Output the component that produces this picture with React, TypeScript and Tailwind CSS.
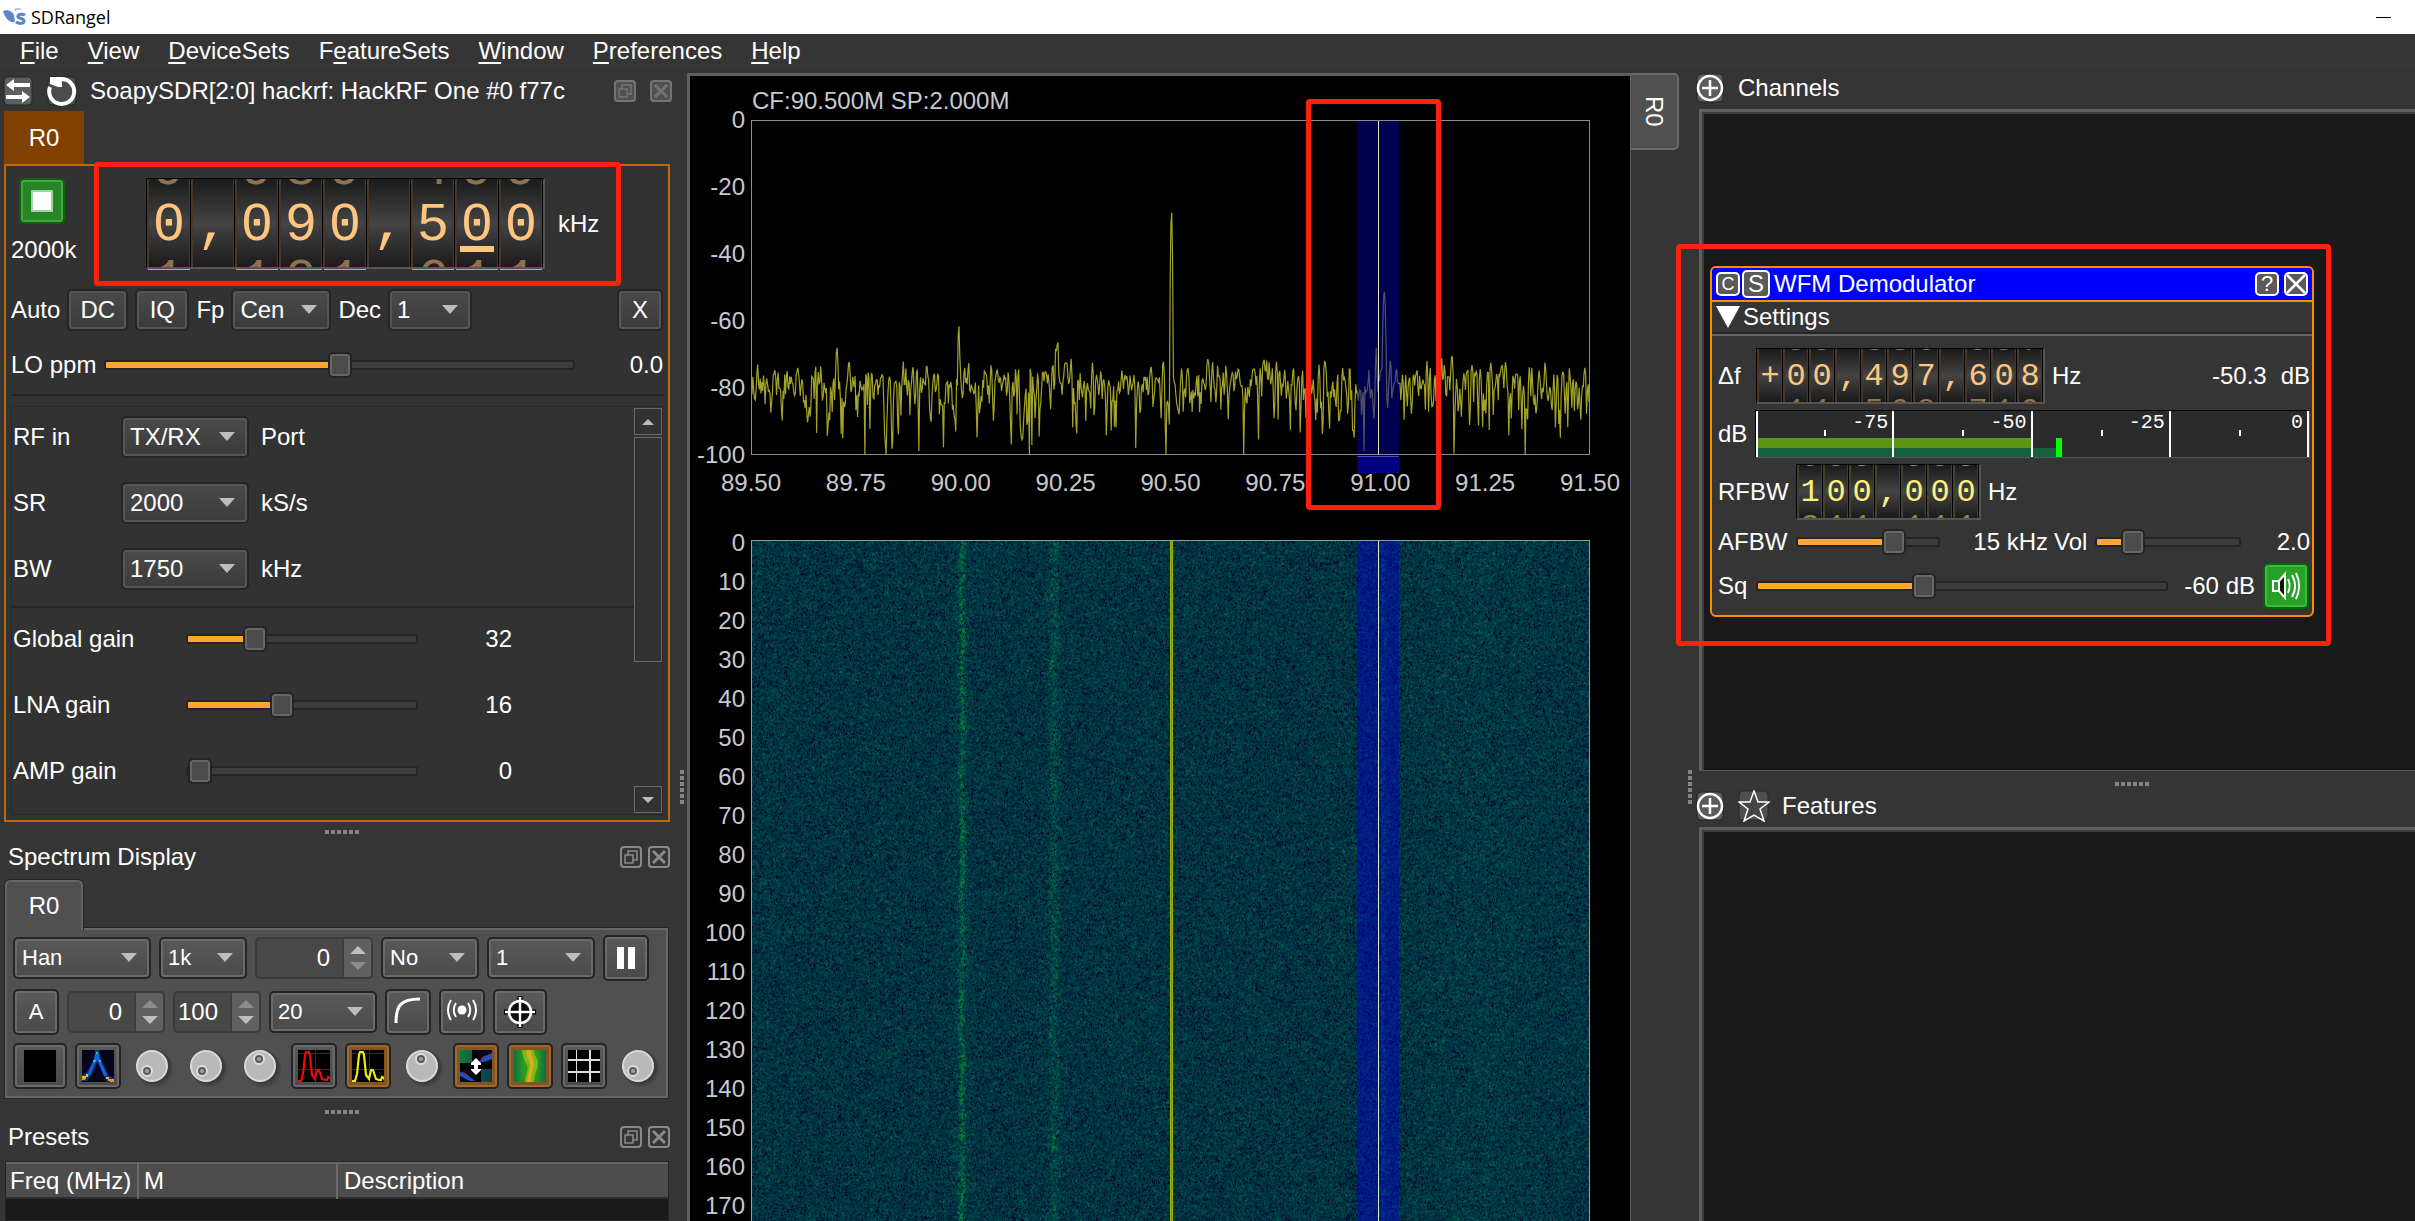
import { useEffect, useRef } from "react";
import type { CSSProperties, ReactNode } from "react";
import clsx from "clsx";

const makeRandom = (seed: number) => {
  let s = seed;
  return () => {
    s = (s + 0x6d2b79f5) | 0;
    let t = Math.imul(s ^ (s >>> 15), 1 | s);
    t = (t + Math.imul(t ^ (t >>> 7), 61 | t)) ^ t;
    return ((t ^ (t >>> 14)) >>> 0) / 4294967296;
  };
};

// One row of FFT noise in dB around 0, neighbouring bins correlated by the window
const noiseRow = (random: () => number, bins: number) => {
  const re: number[] = [];
  const im: number[] = [];
  for (let i = 0; i < bins + 2; i++) {
    const r = Math.sqrt(-2 * Math.log(random() + 1e-9));
    const a = 2 * Math.PI * random();
    re.push(r * Math.cos(a));
    im.push(r * Math.sin(a));
  }
  const out: number[] = [];
  for (let i = 0; i < bins; i++) {
    const x = -0.5 * re[i] + re[i + 1] - 0.5 * re[i + 2];
    const y = -0.5 * im[i] + im[i + 1] - 0.5 * im[i + 2];
    out.push(10 * Math.log10((x * x + y * y) / 3 + 1e-4));
  }
  return out;
};

const PEAKS = [
  { x: 85, db: -68, w: 1.5 },
  { x: 207, db: -61, w: 0.9 },
  { x: 306, db: -65, w: 0.9 },
  { x: 420, db: -27, w: 0.9 },
  { x: 625, db: -68, w: 1 },
  { x: 633, db: -51, w: 1.4 },
];

const spectrumPath = () => {
  const bins = 1024;
  const noise = noiseRow(makeRandom(91), bins);
  let d = "";
  for (let i = 0; i < bins; i++) {
    const x = (i / (bins - 1)) * 838;
    let db = -78.5 + noise[i] * 0.95 + 6 * Math.exp(-(((x - 304) / 10) ** 2));
    for (const p of PEAKS) {
      const off = Math.abs(x - p.x) / p.w;
      if (off < 2) db = Math.max(db, p.db - off * off * 9);
    }
    const y = Math.min(334, -db * 3.34);
    d += `${i ? "L" : "M"}${x.toFixed(1)} ${y.toFixed(1)}`;
  }
  return d;
};

const SPECTRUM = spectrumPath();

const Waterfall = () => {
  const ref = useRef<HTMLCanvasElement>(null);

  useEffect(() => {
    const canvas = ref.current;
    const ctx = canvas?.getContext("2d");
    if (!canvas || !ctx) return;
    const w = (canvas.width = canvas.clientWidth);
    const h = (canvas.height = canvas.clientHeight);
    const img = ctx.createImageData(w, h);
    const random = makeRandom(7);
    const scale = 838 / w;
    let prev = noiseRow(random, w);
    let drift = 0;
    for (let y = 0; y < h; y++) {
      const row = noiseRow(random, w);
      drift = drift * 0.9 + (random() - 0.5) * 1.2;
      for (let x = 0; x < w; x++) {
        const px = x * scale;
        let db = row[x] * 0.6 + prev[x] * 0.4;
        db += 6 * Math.exp(-(((px - 210 - drift) / 2.5) ** 2)) + 2 * Math.exp(-(((px - 210) / 9) ** 2));
        db += 4.5 * Math.exp(-(((px - 302 - drift) / 5) ** 2));
        db += 5 * Math.exp(-(((px - 631 - drift) / 3) ** 2));
        db += 1 * Math.exp(-(((px - 725) / 60) ** 2));
        const t = Math.max(0, Math.min(1.3, (db + 15) / 20));
        const hot = Math.max(0, t - 0.9);
        const i = (y * w + x) * 4;
        img.data[i] = 0;
        img.data[i + 1] = 2 + 76 * t + hot * 90;
        img.data[i + 2] = 42 + 36 * t - hot * 120;
        img.data[i + 3] = 255;
      }
      prev = row;
    }
    ctx.putImageData(img, 0, 0);
    const cx = Math.round(419 / scale);
    ctx.fillStyle = "#9db500";
    ctx.fillRect(cx - 1, 0, 3, h);
    ctx.fillStyle = "#6a9a00";
    ctx.fillRect(cx, 0, 1, h);
  }, []);

  return <canvas ref={ref} className="block h-full w-full" />;
};

const Dots = ({ vertical }: { vertical?: boolean }) => (
  <div className={clsx("flex gap-[2px]", vertical && "flex-col")}>
    {[0, 1, 2, 3, 4, 5].map((i) => (
      <span key={i} className="h-1 w-1 bg-[#858585]" />
    ))}
  </div>
);

const BUTTON =
  "flex shrink-0 items-center justify-center rounded-[5px] border-2 border-[#252525] bg-linear-to-b from-[#4a4a4a] to-[#3b3b3b] shadow-[inset_0_0_0_2px_#565656]";
const LIGHT =
  "flex shrink-0 items-center justify-center rounded-[5px] border-2 border-[#252525] bg-linear-to-b from-[#5a5a5a] to-[#4a4a4a] shadow-[inset_0_0_0_2px_#6a6a6a]";
const CHECKED =
  "flex shrink-0 items-center justify-center rounded-[5px] border-2 border-[#252525] bg-[#84551f] shadow-[inset_0_0_0_2px_#9c6a30]";

const Combo = ({ value, label, className, light }: { value: string; label: string; className: string; light?: boolean }) => (
  <div className={clsx("relative h-[42px] shrink-0", className)}>
    <select
      aria-label={label}
      defaultValue={value}
      className={clsx(
        "h-full w-full appearance-none rounded-[5px] border-2 border-[#252525] bg-linear-to-b pl-[7px] text-white",
        light
          ? "from-[#5a5a5a] to-[#4a4a4a] text-[22px] shadow-[inset_0_0_0_2px_#6a6a6a]"
          : "from-[#4a4a4a] to-[#3b3b3b] shadow-[inset_0_0_0_2px_#565656]"
      )}
    >
      <option>{value}</option>
    </select>
    <svg viewBox="0 0 16 9" className="pointer-events-none absolute top-4 right-[14px] h-[9px] w-4" fill="#bdbdbd">
      <path d="M0 0h16L8 9z" />
    </svg>
  </div>
);

const Spin = ({ value, label, className, up, down }: { value: number; label: string; className: string; up: string; down: string }) => (
  <div className={clsx("flex h-[42px] shrink-0 overflow-hidden rounded-[5px] border-2 border-[#3c3c3c] bg-[#484848]", className)}>
    <input
      aria-label={label}
      type="number"
      defaultValue={value}
      className="w-0 min-w-0 flex-1 appearance-none pr-3 text-right [&::-webkit-inner-spin-button]:appearance-none"
    />
    <div className="flex w-[29px] flex-col border-l-2 border-[#3c3c3c] bg-[#606060]">
      <button aria-label={`${label} up`} className="flex flex-1 items-end justify-center pb-1">
        <svg viewBox="0 0 16 8" className="h-2 w-4" fill={up}><path d="M0 8h16L8 0z" /></svg>
      </button>
      <button aria-label={`${label} down`} className="flex flex-1 items-start justify-center pt-1">
        <svg viewBox="0 0 16 8" className="h-2 w-4" fill={down}><path d="M0 0h16L8 8z" /></svg>
      </button>
    </div>
  </div>
);

const Slider = ({ label, percent, className }: { label: string; percent: number; className: string }) => (
  <input
    type="range"
    aria-label={label}
    min={0}
    max={100}
    defaultValue={percent}
    style={{ "--fill": `${percent}%` } as CSSProperties}
    className={clsx(
      "h-[26px] appearance-none bg-transparent",
      "[&::-webkit-slider-runnable-track]:h-[10px] [&::-webkit-slider-runnable-track]:rounded-[3px] [&::-webkit-slider-runnable-track]:border-2 [&::-webkit-slider-runnable-track]:border-[#252525] [&::-webkit-slider-runnable-track]:bg-[linear-gradient(to_right,#ffa530_var(--fill),#3c3c3c_var(--fill))]",
      "[&::-webkit-slider-thumb]:-mt-[10px] [&::-webkit-slider-thumb]:h-[26px] [&::-webkit-slider-thumb]:w-6 [&::-webkit-slider-thumb]:appearance-none [&::-webkit-slider-thumb]:rounded-[5px] [&::-webkit-slider-thumb]:border-2 [&::-webkit-slider-thumb]:border-[#252525] [&::-webkit-slider-thumb]:bg-[#4b4b4b] [&::-webkit-slider-thumb]:shadow-[inset_0_0_0_2px_#666]",
      className
    )}
  />
);

const Dial = ({ digits, tone, big, cursor }: { digits: string; tone: "orange" | "yellow"; big?: boolean; cursor?: number }) => (
  <div className={clsx("flex shrink-0 border-t border-r-2 border-b-2 border-l border-t-black border-r-[#555] border-b-[#555] border-l-black bg-black font-[Liberation_Mono,monospace]", big ? "h-[91px]" : "h-[56px]")}>
    {digits.split("").map((c, i) => {
      const n = Number(c);
      const digit = c >= "0" && c <= "9";
      return (
        <div key={i} className={clsx("relative h-full", big ? "w-[44px]" : "w-[26px]")}>
          <div
            className={clsx(
              "flex h-full flex-col items-center justify-center overflow-hidden border-x-2 bg-linear-to-b from-[#1b1b1b] via-[#444] to-[#1b1b1b]",
              big ? "pt-[6px] text-[54px] leading-[56px]" : "pt-[2px] text-[32px] leading-[35px]",
              tone === "orange" ? "border-[#46372a] text-[#ffc680]" : "border-[#45412a] text-[#fff078]"
            )}
          >
            {digit && <span aria-hidden className="opacity-50">{(n + 9) % 10}</span>}
            <span>{c}</span>
            {digit && <span aria-hidden className="opacity-50">{(n + 1) % 10}</span>}
          </div>
          <span className="absolute inset-y-0 right-0 w-px bg-black" />
          {cursor === i && <span className="absolute bottom-[15px] left-[5px] h-[6px] w-[34px] bg-[#ffc680]" />}
          {big && digit && <span className="absolute right-px -bottom-[3px] left-px h-px bg-[#e0a050]" />}
        </div>
      );
    })}
  </div>
);

const DockButtons = ({ wide }: { wide?: boolean }) => (
  <div className={clsx("ml-auto flex", wide ? "gap-[14px] opacity-75" : "gap-[6px]")}>
    <button aria-label="Float">
      <svg viewBox="0 0 22 22" className="h-[22px] w-[22px]" fill="none" stroke="#8a8a8a" strokeWidth="2">
        {wide && <rect width="22" height="22" rx="4" fill="#5a5a5a" stroke="none" />}
        <rect x="1" y="1" width="20" height="20" rx="3" />
        <path d="M5 9h8v8H5zM8 9V5h9v9h-4" strokeWidth="1.5" />
      </svg>
    </button>
    <button aria-label="Close">
      <svg viewBox="0 0 22 22" className="h-[22px] w-[22px]" fill="none" stroke="#8a8a8a" strokeWidth="2">
        {wide && <rect width="22" height="22" rx="4" fill="#5a5a5a" stroke="none" />}
        <rect x="1" y="1" width="20" height="20" rx="3" />
        <path d="M5 5l12 12M17 5L5 17" strokeWidth="3" />
      </svg>
    </button>
  </div>
);

const Knob = ({ label, x, y }: { label: string; x: number; y: number }) => (
  <button aria-label={label} className="flex h-[46px] w-[46px] shrink-0 items-center justify-center">
    <svg viewBox="0 0 46 46" className="h-[46px] w-[46px]">
      <circle cx="26" cy="26" r="18" fill="#474747" />
      <circle cx="25" cy="24" r="17" fill="#3c3c3c" />
      <circle cx="23" cy="23" r="15" fill="#b9b9b9" stroke="#dadada" strokeWidth="2" />
      <circle cx={x} cy={y} r="5" fill="#5c5c5c" stroke="#dcdcdc" strokeWidth="2" />
      <circle cx={x} cy={y} r="2" fill="#a0a0a0" />
    </svg>
  </button>
);

const Thumb = ({ children }: { children: ReactNode }) => (
  <svg viewBox="0 0 32 32" className="h-8 w-8" fill="none">
    <rect width="32" height="32" fill="#000" />
    {children}
  </svg>
);

const Trace = ({ color }: { color: string }) => (
  <Thumb>
    <path d="M0 3.500h32M0 19.500h32M17.500 0v32" stroke="#2c2c2c" />
    <path d="M0 31h3l2-7 2-19 1-3h3l1 3 2 20 3 4 2-9 2 0 3 9 3 1 2 0 1-3 2 1 1 3" stroke={color} strokeWidth="2.2" />
  </Thumb>
);

const PlusIcon = () => (
  <svg viewBox="0 0 28 30" className="h-[30px] w-7" fill="none" stroke="#fff">
    <rect x="1" y="1" width="26" height="28" rx="4" fill="#5c5c5c" stroke="#262626" />
    <circle cx="14" cy="15" r="12" strokeWidth="2.5" />
    <path d="M14 7v16M6 15h16" strokeWidth="2.5" />
  </svg>
);

const MENU = [
  ["", "F", "ile"],
  ["", "V", "iew"],
  ["", "D", "eviceSets"],
  ["F", "e", "atureSets"],
  ["", "W", "indow"],
  ["", "P", "references"],
  ["", "H", "elp"],
];

const DeviceDock = () => (
  <>
    <div className="flex h-10 shrink-0 items-center pr-3 pl-[3px]">
      <button aria-label="Change device">
        <svg viewBox="0 0 30 30" className="h-[30px] w-[30px]">
          <rect x="1" y="1" width="28" height="28" rx="4" fill="#5e5e5e" stroke="#262626" />
          <path d="M3 9l8-6v4h16v4H11v4zM27 21l-8-6v4H3v4h16v4z" fill="#fff" />
        </svg>
      </button>
      <button aria-label="Reload" className="ml-[14px]">
        <svg viewBox="0 0 30 32" className="h-8 w-[30px]">
          <rect x="1" y="2" width="28" height="28" rx="4" fill="#4c4c4c" stroke="#262626" />
          <path d="M14 4a12.5 12.5 0 1 1-11 8" fill="none" stroke="#fff" strokeWidth="4" />
          <path d="M3 2l12 0v10H11L3 9z" fill="#fff" />
        </svg>
      </button>
      <h2 className="ml-[13px]">SoapySDR[2:0] hackrf: HackRF One #0 f77c</h2>
      <DockButtons wide />
    </div>
    <button className="ml-1 h-[53px] w-20 shrink-0 bg-[#804000]">R0</button>

    <section className="relative mr-[14px] ml-1 shrink-0 border-2 border-[#bf6a0a] bg-[#323232] px-[5px] pb-[5px]">
      <div className="pointer-events-none absolute -top-1 left-[88px] h-[124px] w-[527px] rounded-[4px] border-[5px] border-[#ff2010]" />
      <div className="flex h-[120px] pt-3">
        <div className="flex w-[66px] flex-col gap-3">
          <button aria-label="Stop acquisition" className="ml-2 flex h-[46px] w-[46px] items-center justify-center rounded-[5px] border-2 border-[#0a640a] bg-[#248724] shadow-[inset_0_0_0_2px_#47a447]">
            <span className="h-[22px] w-[22px] border-2 border-[#a5cfa5] bg-white" />
          </button>
          <span className="leading-7">2000k</span>
        </div>
        <div className="ml-[69px] flex gap-[13px]">
          <Dial digits="0,090,500" tone="orange" big cursor={7} />
          <span className="leading-[91px]">kHz</span>
        </div>
      </div>
      <div className="flex h-12 items-center gap-[7px]">
        <span>Auto</span>
        <button className={clsx(BUTTON, "h-[42px] w-[61px]")}>DC</button>
        <button className={clsx(BUTTON, "h-[42px] w-[54px]")}>IQ</button>
        <span>Fp</span>
        <Combo label="Fp" value="Cen" className="w-[100px]" />
        <span>Dec</span>
        <Combo label="Decimation" value="1" className="w-[84px]" />
        <button className={clsx(BUTTON, "ml-auto h-[42px] w-[46px]")}>X</button>
      </div>
      <div className="flex h-[62px] items-center gap-2 border-b-2 border-[#262626] pt-[2px]">
        <span>LO ppm</span>
        <Slider label="LO ppm" percent={50} className="min-w-0 flex-1" />
        <span className="w-20 text-right">0.0</span>
      </div>

      <div className="mt-[10px] flex border border-[#282828]">
        <div className="flex-1">
          <div className="flex flex-col gap-[6px] border-b-2 border-[#262626] pb-[7px] pl-px">
            {[
              ["RF in", "TX/RX", "Port"],
              ["SR", "2000", "kS/s"],
              ["BW", "1750", "kHz"],
            ].map(([label, value, unit]) => (
              <div key={label} className="flex h-[60px] items-center">
                <span className="w-[108px]">{label}</span>
                <Combo label={label} value={value} className="w-[128px]" />
                <span className="ml-3">{unit}</span>
              </div>
            ))}
          </div>
          <div className="flex flex-col gap-[6px] pt-px pb-[13px] pl-px">
            {[
              { label: "Global gain", percent: 27, value: 32 },
              { label: "LNA gain", percent: 40, value: 16 },
              { label: "AMP gain", percent: 0, value: 0 },
            ].map((g) => (
              <div key={g.label} className="flex h-[60px] items-center">
                <span className="w-[173px]">{g.label}</span>
                <Slider label={g.label} percent={g.percent} className="w-[232px]" />
                <span className="w-[94px] text-right">{g.value}</span>
              </div>
            ))}
          </div>
        </div>
        <div className="flex w-7 flex-col gap-[2px] py-px">
          <button aria-label="Scroll up" className="flex h-[27px] items-center justify-center border border-[#6a6a6a]">
            <svg viewBox="0 0 12 6" className="h-[6px] w-3" fill="#bdbdbd"><path d="M0 6h12L6 0z" /></svg>
          </button>
          <div className="h-[225px] border border-[#6a6a6a]" />
          <button aria-label="Scroll down" className="mt-auto flex h-[27px] items-center justify-center border border-[#6a6a6a]">
            <svg viewBox="0 0 12 6" className="h-[6px] w-3" fill="#bdbdbd"><path d="M0 0h12L6 6z" /></svg>
          </button>
        </div>
      </div>
    </section>
  </>
);

const SpectrumDock = () => (
  <>
    <div className="flex h-5 shrink-0 items-center justify-center"><Dots /></div>
    <div className="flex h-[30px] shrink-0 items-center pr-[14px] pl-2">
      <h2>Spectrum Display</h2>
      <DockButtons />
    </div>
    <button className="relative z-10 mt-2 -mb-[2px] ml-[5px] h-[50px] w-[78px] shrink-0 rounded-t-[5px] border-2 border-b-0 border-[#666] bg-[#505050] outline-1 outline-[#262626] [clip-path:inset(-1px_-1px_0_-1px)]">R0</button>
    <section className="mr-4 ml-[5px] flex shrink-0 flex-col gap-2 border-2 border-[#666] bg-[#505050] px-[6px] pt-[5px] pb-[7px] shadow-[0_0_0_1px_#262626]">
      <div className="flex h-[46px] items-center gap-2">
        <Combo light label="FFT window" value="Han" className="w-[138px]" />
        <Combo light label="FFT size" value="1k" className="w-[88px]" />
        <Spin label="Overlap" value={0} className="w-[118px]" up="#bdbdbd" down="#8c8c8c" />
        <Combo light label="Averaging mode" value="No" className="w-[98px]" />
        <Combo light label="Averages" value="1" className="w-[108px]" />
        <button aria-label="Pause" className={clsx(LIGHT, "h-[46px] w-[46px]")}>
          <svg viewBox="0 0 18 22" className="h-[22px] w-[18px]" fill="#fff"><path d="M0 0h7v22H0zM11 0h7v22h-7z" /></svg>
        </button>
      </div>
      <div className="flex h-[46px] items-center gap-2">
        <button className={clsx(LIGHT, "h-[46px] w-[46px] text-[22px]")}>A</button>
        <Spin label="Reference level" value={0} className="w-[98px]" up="#8c8c8c" down="#bdbdbd" />
        <Spin label="Power range" value={100} className="w-[88px]" up="#8c8c8c" down="#bdbdbd" />
        <Combo light label="Frames per second" value="20" className="w-[108px]" />
        <button aria-label="Log scale" className={clsx(LIGHT, "h-[46px] w-[46px]")}>
          <svg viewBox="0 0 28 28" className="-mt-1 h-7 w-7" fill="none" stroke="#fff" strokeWidth="3"><path d="M2 27C2 10 6 3 26 3" /></svg>
        </button>
        <button aria-label="Spectrum server" className={clsx(LIGHT, "h-[46px] w-[46px]")}>
          <svg viewBox="0 0 30 24" className="-mt-1 h-6 w-[30px]" fill="none" stroke="#fff" strokeWidth="2">
            <circle cx="15" cy="12" r="4.5" fill="#fff" stroke="none" />
            <path d="M9 5c-3 4-3 10 0 14M21 5c3 4 3 10 0 14M4 2c-4 6-4 14 0 20M26 2c4 6 4 14 0 20" />
          </svg>
        </button>
        <button aria-label="Markers" className={clsx(LIGHT, "h-[46px] w-[54px]")}>
          <svg viewBox="0 0 32 32" className="h-8 w-8" fill="none">
            <circle cx="16" cy="16" r="11.5" fill="#111" />
            <path d="M16 0v32M0 16h32" stroke="#000" strokeWidth="5" />
            <circle cx="16" cy="16" r="11" stroke="#fff" strokeWidth="2.5" />
            <path d="M16 1v30M1 16h30" stroke="#fff" strokeWidth="2.5" />
          </svg>
        </button>
      </div>
      <div className="flex h-[46px] items-center gap-2">
        <button aria-label="Clear spectrum" className={clsx(LIGHT, "h-[46px] w-[54px]")}><Thumb>{null}</Thumb></button>
        <button aria-label="Phosphor" className={clsx(LIGHT, "h-[46px] w-[46px]")}>
          <Thumb>
            <rect width="32" height="32" fill="#05051a" />
            <path d="M13 1h4l2 8 7 16 6 3v4h-7l-4-8-5-11h-1l-5 11-5 7H0v-6l5-3 7-13z" fill="#0d2fa0" />
            <path d="M13 4h4l1 6 7 15-3 1-6-15h-2L8 25l-3 1 7-16z" fill="#1268e0" />
            <path d="M13 0h4v2h-4z" fill="#0b5040" />
            <path d="M14 2h2v2h-2zM11 10h3v2h-3zM17 10h2v2h-2z" fill="#30c890" />
            <path d="M0 26h4v-2h2v3H4v2H0zM24 27h3v2h-3z" fill="#d8c030" />
            <path d="M0 28h3v2H0zM26 29h6v3h-4v-1h-2z" fill="#ff8a28" />
          </Thumb>
        </button>
        <Knob label="Phosphor stroke" x={18} y={28} />
        <Knob label="Phosphor decay" x={19} y={28} />
        <Knob label="Decay divisor" x={22} y={16} />
        <button aria-label="Max hold" className={clsx(LIGHT, "h-[46px] w-[46px]")}><Trace color="#f00808" /></button>
        <button aria-label="Current trace" className={clsx(CHECKED, "h-[46px] w-[46px]")}><Trace color="#ecec08" /></button>
        <Knob label="Trace intensity" x={22} y={16} />
        <button aria-label="Invert waterfall" className={clsx(CHECKED, "h-[46px] w-[46px]")}>
          <Thumb>
            <defs>
              <linearGradient id="invert-a"><stop stopColor="#0f7a3c" /><stop offset="1" stopColor="#0c3a50" /></linearGradient>
            </defs>
            <path d="M0 0h12v13H0zM21 19h11v13H21z" fill="url(#invert-a)" />
            <path d="M14 0h18v12H20zM0 20h14v12H0z" fill="#06061c" />
            <path d="M20 12l3-5 9-4v6l-8 3zM0 22l6 2 9 7h-5l-10-5z" fill="#1a50c8" />
            <path d="M20 11l3-4 3-1M2 22l4 2 4 4" stroke="#a02828" />
            <path d="M16 8l5 5v2h-3v4h3v1l-5 5-5-5v-1h3v-4h-3v-2z" fill="#fff" />
          </Thumb>
        </button>
        <button aria-label="Waterfall" className={clsx(CHECKED, "h-[46px] w-[46px]")}>
          <Thumb>
            <defs>
              <linearGradient id="wf-side">
                <stop stopColor="#0b7048" /><stop offset="0.3" stopColor="#2f9a1c" />
                <stop offset="0.7" stopColor="#2f9a1c" /><stop offset="1" stopColor="#0b6a50" />
              </linearGradient>
            </defs>
            <rect width="32" height="32" fill="url(#wf-side)" />
            <path d="M8 0h12c0 6 4 8 4 14s-4 8-4 18h-9c0-6 4-12 2-17-2-4-5-9-5-15z" fill="#7cb81c" />
            <path d="M12 0h5c0 5 3 8 3 14 0 5-3 8-3 18h-4c0-8 3-11 3-17 0-5-4-9-4-15z" fill="#d0b01c" />
          </Thumb>
        </button>
        <button aria-label="Grid" className={clsx(LIGHT, "h-[46px] w-[46px]")}>
          <Thumb><path d="M8.500 0v32" stroke="#ddd" /><path d="M22 0v32M0 10h32M0 22h32" stroke="#ddd" strokeWidth="2" /></Thumb>
        </button>
        <Knob label="Grid intensity" x={18} y={28} />
      </div>
    </section>
  </>
);

const PresetsDock = () => (
  <>
    <div className="flex h-6 shrink-0 items-center justify-center pt-1"><Dots /></div>
    <div className="flex h-[30px] shrink-0 items-center pr-[14px] pl-2">
      <h2>Presets</h2>
      <DockButtons />
    </div>
    <div className="mt-[9px] mr-[15px] ml-[5px] flex-1 border border-[#262626] bg-[#191919]">
      <table className="w-full table-fixed border-collapse text-left">
        <thead>
          <tr className="h-[35px] border-t-2 border-b-2 border-t-[#666] border-b-[#2e2e2e] bg-[#4c4c4c]">
            <th className="w-[132px] border-r-2 border-[#6a6a6a] pl-1 font-normal whitespace-nowrap">Freq (MHz)</th>
            <th className="w-[199px] border-r-2 border-[#6a6a6a] pl-[5px] font-normal">M</th>
            <th className="pl-[6px] font-normal">Description</th>
          </tr>
        </thead>
      </table>
    </div>
  </>
);

const SpectrumView = () => (
  <div className="mt-[2px] ml-[3px] flex min-w-0 flex-1 flex-col border-t-[3px] border-l-[3px] border-[#606060] bg-black pr-10 text-[#c8c8d0]">
    <div className="flex h-11 shrink-0 items-center pt-[6px] pl-[62px]">CF:90.500M SP:2.000M</div>
    <div className="flex h-[335px] shrink-0">
      <div className="flex w-[61px] flex-col justify-between">
        {["0", "-20", "-40", "-60", "-80", "-100"].map((l) => (
          <span key={l} className="flex h-0 items-center justify-end pr-[6px]">{l}</span>
        ))}
      </div>
      <div className="relative flex-1 border border-[#8c8c8c]">
        <svg viewBox="0 0 838 334" preserveAspectRatio="none" className="absolute inset-0 h-full w-full">
          <path d={SPECTRUM} fill="none" stroke="#a3a32a" strokeWidth="1.2" />
        </svg>
        <div className="absolute inset-y-0 left-[72.3%] w-[5%] bg-[#0000a0]/50" />
        <div className="absolute inset-y-0 left-[74.8%] w-px bg-[#e6e6b4]" />
        <div className="absolute top-full left-[72.3%] mt-[2px] h-[17px] w-[5%] border-t border-[#5050b0] bg-[#000080]" />
        <div className="pointer-events-none absolute -top-[22px] left-[66.200%] h-[411px] w-[135px] rounded-[4px] border-[5px] border-[#ff2010]" />
      </div>
    </div>
    <div className="ml-[61px] flex h-[68px] shrink-0 justify-between pt-4">
      {["89.50", "89.75", "90.00", "90.25", "90.50", "90.75", "91.00", "91.25", "91.50"].map((l) => (
        <span key={l} className="flex h-6 w-0 items-center justify-center">{l}</span>
      ))}
    </div>
    <div className="flex min-h-0 flex-1 overflow-hidden">
      <div className="w-[61px] pr-[6px] text-right leading-[39px]">
        {Array.from({ length: 18 }, (_, i) => (
          <div key={i}>{i * 10}</div>
        ))}
      </div>
      <div className="relative mt-[17px] flex-1 border border-b-0 border-[#8ca0a0]">
        <Waterfall />
        <div className="absolute inset-y-0 left-[72.3%] w-[5%] bg-[#0000d0]/45" />
        <div className="absolute inset-y-0 left-[74.8%] w-px bg-[#e6e6b4]" />
      </div>
    </div>
  </div>
);

const LevelMeter = () => (
  <div className="relative flex h-12 flex-1 border border-black border-r-[#555] border-b-[#555] bg-[#2b2b2b] font-[Liberation_Mono,monospace] text-[20px] leading-[24px]">
    <div className="absolute bottom-2 left-0 h-[11px] w-1/2 bg-[#5a9614]" />
    <div className="absolute bottom-0 left-0 h-[9px] w-[54.300%] bg-[#17603f]" />
    <div className="absolute bottom-0 left-[54.300%] h-[19px] w-[6px] bg-[#00ff00]" />
    <span className="absolute inset-y-0 left-0 w-[2px] bg-white" />
    {["-75", "-50", "-25", "0"].map((l) => (
      <div key={l} className="relative h-full flex-1 border-r-2 border-white pr-1 text-right">
        {l}
        <span className="absolute top-[19px] left-1/2 h-[6px] w-[2px] bg-white" />
      </div>
    ))}
  </div>
);

const BADGE = "flex shrink-0 items-center justify-center rounded-[5px] border-2 border-white bg-[#5a5a5a]";

const WfmDemodulator = () => (
  <section className="absolute top-[152px] left-[6px] w-[604px] overflow-hidden rounded-[6px] border-2 border-[#ff8c00] bg-[#353535]">
    <div className="flex h-[34px] items-center border-b-2 border-[#ff8c00] bg-[#0000ff] px-1">
      <button className={clsx(BADGE, "h-6 w-6 text-[18px] leading-none")}>C</button>
      <button className={clsx(BADGE, "ml-[2px] h-7 w-7 leading-none")}>S</button>
      <h3 className="ml-1 flex-1">WFM Demodulator</h3>
      <button className={clsx(BADGE, "h-6 w-6 text-[22px] leading-none")}>?</button>
      <button aria-label="Close channel" className={clsx(BADGE, "ml-[5px] h-6 w-6")}>
        <svg viewBox="0 0 20 20" className="h-5 w-5" stroke="#fff" strokeWidth="2.5"><path d="M1 1l18 18M19 1L1 19" /></svg>
      </button>
    </div>
    <button className="flex h-[34px] w-full items-center gap-[3px] border-b-2 border-[#666] pb-[3px] pl-1 shadow-[inset_0_-2px_0_#262626]">
      <svg viewBox="0 0 24 22" className="h-[22px] w-6" fill="#fff"><path d="M0 0h24L12 22z" /></svg>
      Settings
    </button>
    <div className="pt-3 pr-[2px] pb-[7px] pl-[6px]">
      <div className="flex items-center">
        <span className="w-[38px]">Δf</span>
        <Dial digits="+00,497,608" tone="orange" />
        <span className="ml-[7px]">Hz</span>
        <span className="ml-auto">-50.3</span>
        <span className="ml-[14px]">dB</span>
      </div>
      <div className="mt-[6px] flex items-center">
        <span className="w-[37px]">dB</span>
        <LevelMeter />
      </div>
      <div className="mt-[6px] flex items-center">
        <span className="w-[78px]">RFBW</span>
        <Dial digits="100,000" tone="yellow" />
        <span className="ml-[7px]">Hz</span>
      </div>
      <div className="flex h-11 items-center">
        <span className="w-[78px]">AFBW</span>
        <Slider label="AFBW" percent={72} className="w-[144px]" />
        <span className="w-[108px] text-right">15 kHz</span>
        <label className="ml-[6px]">Vol</label>
        <Slider label="Vol" percent={20} className="ml-2 w-[146px]" />
        <span className="ml-auto">2.0</span>
      </div>
      <div className="flex h-11 items-center">
        <span className="w-[38px]">Sq</span>
        <Slider label="Squelch" percent={40} className="min-w-0 flex-1" />
        <span className="w-[87px] text-right">-60 dB</span>
        <button aria-label="Mute" className="mr-px ml-2 flex h-[46px] w-[46px] items-center justify-center rounded-[5px] border-2 border-[#0a640a] bg-[#27a127] shadow-[inset_0_0_0_2px_#3fb83f]">
          <svg viewBox="0 0 30 30" className="h-[30px] w-[30px]" fill="none" stroke="#fff" strokeWidth="2">
            <path d="M8 10l6-7v24l-6-7z" fill="#111" />
            <path d="M2 10h6v10H2z" fill="#27a127" />
            <path d="M17 8c2 4 2 10 0 14M21 4c4 7 4 15 0 22M25 2c4 8 4 18 0 26" />
          </svg>
        </button>
      </div>
    </div>
  </section>
);

const PANE = "relative mt-0 ml-[15px] border-t-[3px] border-l-[3px] border-[#606060]";
const PANE_INNER = "h-full border-t-2 border-l-2 border-[#3c3c3c] bg-[#191919]";

const App = () => (
  <div className="flex h-screen min-h-[700px] flex-col overflow-hidden bg-[#353535] font-[Liberation_Sans,Arial,sans-serif] text-[24px] leading-7 text-white">
    <header className="flex h-[34px] shrink-0 items-center bg-white pr-6 pl-[3px] text-black">
      <svg viewBox="0 0 24 20" className="h-5 w-6" fill="#5b85cc">
        <path d="M0 4c5-2 10 1 11 4l1 7C6 16 2 11 0 4z" />
        <path d="M11 2c4-2 8-1 9 1-3-1-6 0-8 1z" fill="#a9c0e6" />
        <path d="M22 8c-4-2-8 0-7 2 1 2 6 1 6 4 0 3-5 3-8 1" fill="none" stroke="#5b85cc" strokeWidth="3" />
      </svg>
      <h1 className="ml-1 flex-1 font-[Open_Sans,Noto_Sans,sans-serif] text-[18px]">SDRangel</h1>
      <button aria-label="Minimize" className="flex h-full items-center"><span className="h-px w-[15px] bg-black" /></button>
    </header>
    <nav className="flex h-[37px] shrink-0 items-center gap-px border-b border-[#2e2e2e] pb-[2px] pl-[6px]">
      {MENU.map(([before, key, after]) => (
        <button key={key + after} className="px-[14px]">
          {before}<span className="underline decoration-2 underline-offset-[3px]">{key}</span>{after}
        </button>
      ))}
    </nav>

    <main className="grid min-h-0 flex-1 grid-cols-[minmax(0,684fr)_minmax(0,1000fr)_minmax(0,731fr)]">
      <aside className="relative flex min-h-0 flex-col overflow-hidden">
        <DeviceDock />
        <SpectrumDock />
        <PresetsDock />
        <div className="absolute top-[699px] right-0"><Dots vertical /></div>
      </aside>

      <div className="flex min-h-0">
        <SpectrumView />
        <div className="mt-[2px] w-[54px] shrink-0 border-l border-[#606060]">
          <button className="flex h-[77px] w-[48px] items-center justify-center rounded-r-[5px] border-2 border-l-0 border-[#6a6a6a] bg-[#505050] [writing-mode:vertical-rl]">R0</button>
        </div>
      </div>

      <div className="relative flex min-h-0 flex-col">
        <div className="absolute top-[699px] left-1"><Dots vertical /></div>
        <div className="mb-1 flex h-[34px] shrink-0 items-center pl-3">
          <button aria-label="Add channel"><PlusIcon /></button>
          <h2 className="ml-[14px]">Channels</h2>
        </div>
        <div className={clsx(PANE, "min-h-0 flex-[662] border-b border-b-[#555]")}>
          <div className={clsx(PANE_INNER, "relative")}>
            <WfmDemodulator />
            <div className="pointer-events-none absolute top-[130px] -left-[28px] h-[402px] w-[655px] rounded-[4px] border-[5px] border-[#ff2010]" />
          </div>
        </div>
        <div className="flex h-5 shrink-0 items-end justify-center pb-[5px] pl-[164px]"><Dots /></div>
        <div className="mb-[6px] flex h-[30px] shrink-0 items-center pl-3">
          <button aria-label="Add feature"><PlusIcon /></button>
          <button aria-label="Feature presets" className="ml-[14px]">
            <svg viewBox="0 0 32 32" className="h-8 w-8">
              <rect x="1" y="1" width="29" height="29" rx="4" fill="#505050" stroke="#262626" />
              <path d="M16 1l4 11h11l-9 7 4 12-10-6-10 6 4-12-9-7h11z" fill="#454545" stroke="#fff" strokeWidth="1.500" />
            </svg>
          </button>
          <h2 className="ml-3">Features</h2>
        </div>
        <div className={clsx(PANE, "min-h-0 flex-[394]")}>
          <div className={PANE_INNER} />
        </div>
      </div>
    </main>
  </div>
);

export default App;
